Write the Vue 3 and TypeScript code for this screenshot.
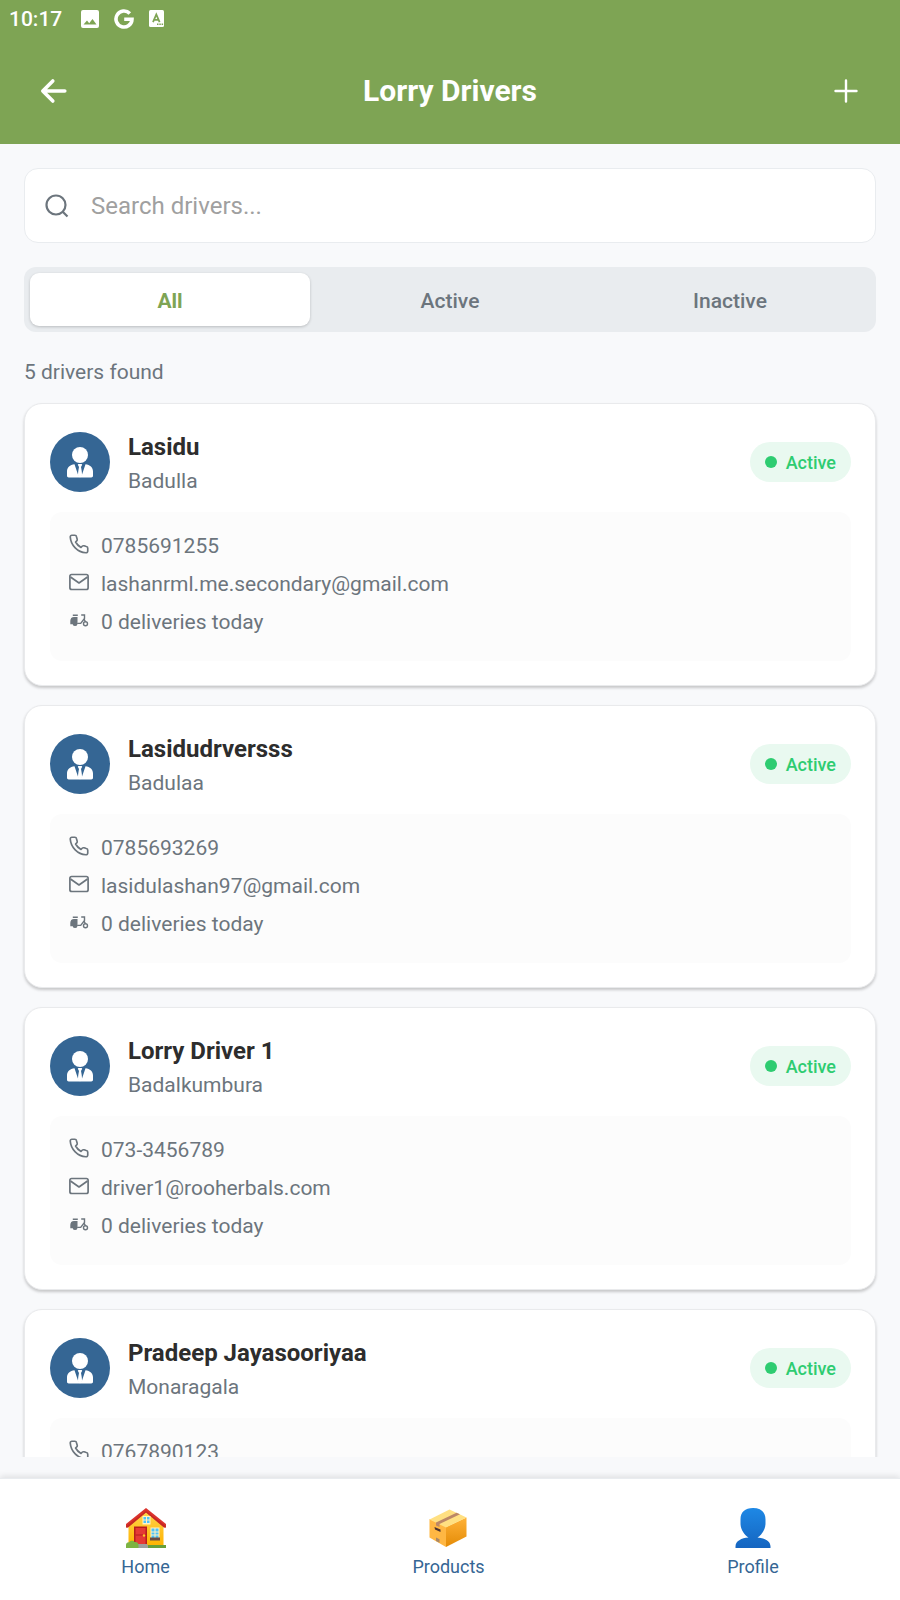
<script setup lang="ts">
import { computed, ref } from 'vue'

interface Driver {
  name: string
  town: string
  phone: string
  email: string
  deliveries: number
  active: boolean
}

const drivers: Driver[] = [
  { name: 'Lasidu', town: 'Badulla', phone: '0785691255', email: 'lashanrml.me.secondary@gmail.com', deliveries: 0, active: true },
  { name: 'Lasidudrversss', town: 'Badulaa', phone: '0785693269', email: 'lasidulashan97@gmail.com', deliveries: 0, active: true },
  { name: 'Lorry Driver 1', town: 'Badalkumbura', phone: '073-3456789', email: 'driver1@rooherbals.com', deliveries: 0, active: true },
  { name: 'Pradeep Jayasooriyaa', town: 'Monaragala', phone: '0767890123', email: '', deliveries: 0, active: true },
]
const total = 5

const filters = ['All', 'Active', 'Inactive'] as const
const filter = ref<(typeof filters)[number]>('All')
const query = ref('')

const shown = computed(() =>
  drivers.filter(
    (d) =>
      (filter.value === 'All' || d.active === (filter.value === 'Active')) &&
      d.name.toLowerCase().includes(query.value.toLowerCase()),
  ),
)
const found = computed(() => (shown.value.length === drivers.length ? total : shown.value.length))
</script>

<template>
  <div class="app">
    <header class="top">
      <div class="status">
        <span class="time">10:17</span>
        <svg width="18" height="18" viewBox="0 0 18 18"><path fill="#fff" fill-rule="evenodd" d="M2 0h14a2 2 0 0 1 2 2v14a2 2 0 0 1-2 2H2a2 2 0 0 1-2-2V2a2 2 0 0 1 2-2zM2.500 14.500h13L11.500 9l-3.300 4.200L6 10.500z" /></svg>
        <svg width="20" height="20" viewBox="0 0 20 20" fill="none" stroke="#fff" stroke-width="3.600"><path d="M15.800 4.500A8 8 0 1 0 18 10.200H10.200" /></svg>
        <svg width="15" height="17" viewBox="0 0 15 17"><rect width="15" height="17" rx="1.500" fill="#fff" /><path fill="none" stroke="#7ea454" stroke-width="1.800" d="M4 12.200 7.300 4.500l3.300 7.700M5.200 9.800h4.300" /><path fill="#7ea454" d="M8 13.600h1.500v1.500H8zM10.300 13.600h1.500v1.500h-1.500zM12.600 13.600h1.500v1.500h-1.500z" /></svg>
      </div>
      <div class="bar">
        <button class="icon-btn" type="button" aria-label="Back">
          <svg width="28" height="28" viewBox="0 0 28 28" fill="none" stroke="#fff" stroke-width="3.600" stroke-linecap="round" stroke-linejoin="round"><path d="M12.800 4 2.800 14l10 10M3.300 14h21.500" /></svg>
        </button>
        <h1>Lorry Drivers</h1>
        <button class="icon-btn" type="button" aria-label="Add driver">
          <svg width="28" height="28" viewBox="0 0 28 28" fill="none" stroke="#fff" stroke-width="2.400" stroke-linecap="round"><path d="M14 3.500v21M3.500 14h21" /></svg>
        </button>
      </div>
    </header>

    <main class="content">
      <label class="search">
        <svg width="26" height="26" viewBox="0 0 26 26" fill="none" stroke="#6c757d" stroke-width="2.200"><circle cx="12" cy="12" r="9.500" /><path d="m18.500 18.500 5 5" /></svg>
        <input v-model="query" type="text" placeholder="Search drivers..." aria-label="Search drivers" />
      </label>

      <div class="tabs">
        <button v-for="f in filters" :key="f" type="button" :class="{ on: filter === f }" :aria-pressed="filter === f" @click="filter = f">{{ f }}</button>
      </div>

      <p class="count">{{ found }} drivers found</p>

      <article v-for="d in shown" :key="d.phone" class="card">
        <div class="head">
          <span class="avatar">
            <svg width="26" height="31" viewBox="0 0 26 31" fill="#fff">
              <circle cx="13" cy="8" r="8" />
              <path d="M7.500 17.300 11.300 28.500 12 20l-1.200-2.200.5-.8h3.400l.5.800L14 20l.7 8.500 3.800-11.200C23 17.800 26 20.500 26 24.500v4.300c0 1-.8 1.700-1.700 1.700H1.700C.8 30.500 0 29.800 0 28.800v-4.300c0-4 3-6.700 7.500-7.200z" />
              <path d="M12 20h2l1 7.500-2 3-2-3z" />
            </svg>
          </span>
          <div class="who">
            <h2>{{ d.name }}</h2>
            <p>{{ d.town }}</p>
          </div>
          <span class="badge"><i class="dot"></i>{{ d.active ? 'Active' : 'Inactive' }}</span>
        </div>
        <ul class="info">
          <li>
            <svg width="20" height="20" viewBox="0 0 24 24" fill="none" stroke="#6c757d" stroke-width="2" stroke-linejoin="round"><path d="M22.500 17v3.500a2 2 0 0 1-2.200 2A20.500 20.500 0 0 1 1.500 3.700 2 2 0 0 1 3.500 1.500H7a2 2 0 0 1 2 1.700c.2 1 .4 2 .8 2.900a2 2 0 0 1-.5 2.100L7.900 9.600a16 16 0 0 0 6.500 6.500l1.400-1.400a2 2 0 0 1 2.100-.5c.9.400 1.900.6 2.900.8a2 2 0 0 1 1.700 2z" /></svg>
            <span>{{ d.phone }}</span>
          </li>
          <li>
            <svg width="20" height="20" viewBox="0 0 20 20" fill="none" stroke="#6c757d" stroke-width="1.700" stroke-linejoin="round"><rect x="0.900" y="2.500" width="18.200" height="15" rx="1.800" /><path d="m1.500 5 8.500 6 8.500-6" /></svg>
            <span>{{ d.email }}</span>
          </li>
          <li>
            <svg width="20" height="20" viewBox="0 0 20 20"><path fill="#6c757d" d="M3.800 4.500h5v1.400h-5zM5 6.900h3.500v6H9a2.400 2.400 0 0 1-.6 1.300 2.400 2.400 0 0 1-4.700 0H1.300V11c0-2.500 1.300-4.100 3.700-4.100z" /><path fill="none" stroke="#6c757d" stroke-width="1.400" d="M8.500 13.400h3.200l3.800-5V5h-3.300M15 9.200l1.400 2.400" /><circle cx="16.500" cy="13.800" r="2" fill="none" stroke="#6c757d" stroke-width="1.400" /></svg>
            <span>{{ d.deliveries }} deliveries today</span>
          </li>
        </ul>
      </article>
    </main>

    <nav class="nav">
      <a href="#home">
        <svg width="42" height="42" viewBox="0 0 42 42">
          <defs><linearGradient id="wall" x1="0" y1="0" x2="0" y2="1"><stop offset="0" stop-color="#ffd54f" /><stop offset="1" stop-color="#ffb300" /></linearGradient></defs>
          <path fill="url(#wall)" d="M3.500 17 21 3l17.500 14v22h-35z" />
          <path fill="#db322c" d="M21 1 1 17v3.500h2L21 5.500l18 15h2V17z" />
          <path fill="#b5221f" d="M1 19v1.500h2L21 5.500l18 15h2V19L21 4z" opacity=".6" />
          <rect x="17.500" y="9" width="8" height="8.500" fill="#fff3c4" /><rect x="18.500" y="10" width="6" height="6" fill="#4fc3f7" /><path stroke="#fff3c4" d="M21.500 10v6M18 13h7" />
          <rect x="9" y="19.500" width="13" height="17.500" fill="#b71c1c" /><rect x="10.500" y="21" width="10" height="16" fill="#e53935" /><path stroke="#b71c1c" d="M10.500 28h10" /><circle cx="19" cy="28.500" r="1.200" fill="#ffca28" />
          <rect x="25.500" y="20.500" width="9" height="11" fill="#fff3c4" /><rect x="26.500" y="21.500" width="7" height="9.500" fill="#4fc3f7" /><path stroke="#fff3c4" d="M30 21v10M26 25h8M26 28h8" /><rect x="25" y="30.500" width="10" height="3" fill="#6d4c41" />
          <path fill="#9e9e9e" d="M12 37h10l2 4H12z" /><rect x="23" y="38" width="18" height="3" fill="#689f38" />
          <path fill="#7cb342" d="M1 41v-3c0-2 2-3 3-2.500C5 33 9 33.500 9.500 35c2-.5 4 .8 4 3V41z" />
        </svg>
        <span>Home</span>
      </a>
      <a href="#products">
        <svg width="42" height="42" viewBox="0 0 42 42">
          <defs><linearGradient id="side" x1="0" y1="0" x2="0" y2="1"><stop offset="0" stop-color="#ffb238" /><stop offset="1" stop-color="#e48b06" /></linearGradient></defs>
          <path fill="#ffb743" d="M2.500 12 19 19v21L2.500 30.500z" /><path fill="url(#side)" d="M19 20 39.500 10.500v19L19 40z" />
          <path fill="#ffe082" d="M2.500 12.500 22.500 2.500l17 8L19 20.500z" />
          <path fill="#bc8766" d="m9 15.500 20.500-9.800 3.500 1.500L12.500 17v3L9 18.500z" />
          <path fill="#a98767" d="M9 30.500l3.500 1.800v3.500L9 34z" /><path fill="#4e342e" d="m7.500 20 6 2.500v2.500L8 22.500z" />
        </svg>
        <span>Products</span>
      </a>
      <a href="#profile">
        <svg width="42" height="42" viewBox="0 0 42 42">
          <defs><linearGradient id="bust" x1="0" y1="0" x2="0" y2="1"><stop offset="0" stop-color="#1e88e5" /><stop offset="1" stop-color="#1565c0" /></linearGradient></defs>
          <path fill="url(#bust)" d="M21 1c8 0 12.500 4 12.500 11.500v4c0 6-4 11.500-8 14 7 .5 13 3.500 13 9V41h-35v-1.500c0-5.500 6-8.500 13-9-4-2.500-8-8-8-14v-4C8.500 5 13 1 21 1z" />
        </svg>
        <span>Profile</span>
      </a>
    </nav>
  </div>
</template>

<style>
body {
  background: #f8f9fb;
}
</style>

<style scoped>
.app {
  display: flex;
  flex-direction: column;
  height: 100vh;
  box-sizing: border-box;
  background: #f8f9fb;
  color: #6c757d;
  font-family: Roboto, 'Liberation Sans', sans-serif;
}
h1, h2, p, ul {
  margin: 0;
  padding: 0;
}
svg {
  display: block;
  flex: none;
}
button {
  border: 0;
  padding: 0;
  background: none;
  font: inherit;
  color: inherit;
}
.top {
  flex: none;
  background: #7ea454;
  color: #fff;
}
.status {
  display: flex;
  align-items: center;
  gap: 15px;
  height: 37px;
  padding: 0 9px;
}
.time {
  margin-right: 4px;
  font-size: 21px;
  font-weight: 500;
}
.bar {
  display: flex;
  align-items: center;
  justify-content: space-between;
  height: 107px;
  padding: 0 24px;
}
.icon-btn {
  display: grid;
  place-items: center;
  width: 60px;
  height: 60px;
}
h1 {
  padding-top: 1px;
  font-size: 30px;
  line-height: 36px;
  font-weight: 700;
}
.content {
  flex: 1;
  min-height: 0;
  margin-bottom: 21px;
  padding: 24px 24px 0;
  overflow-y: auto;
  scrollbar-width: none;
}
.search {
  display: flex;
  align-items: center;
  gap: 21px;
  height: 75px;
  box-sizing: border-box;
  padding: 0 19px;
  border: 1px solid #e9ecef;
  border-radius: 14px;
  background: #fff;
}
.search input {
  flex: 1;
  min-width: 0;
  padding: 1px 0 0;
  border: 0;
  outline: 0;
  background: none;
  font: 24px Roboto, 'Liberation Sans', sans-serif;
  color: #2d2d2d;
}
.search input::placeholder {
  color: #a0a0a0;
  opacity: 1;
}
.tabs {
  display: flex;
  margin-top: 24px;
  padding: 6px;
  border-radius: 12px;
  background: #e9ecef;
}
.tabs button {
  flex: 1;
  height: 53px;
  padding-top: 2px;
  border-radius: 9px;
  font-size: 21px;
  font-weight: 500;
}
.tabs .on {
  background: #fff;
  color: #7ea454;
  font-weight: 700;
  box-shadow: 0 1px 3px rgba(0, 0, 0, 0.2);
}
.count {
  margin: 24px 0 15px;
  font-size: 21px;
  line-height: 32px;
}
.card {
  margin-bottom: 19px;
  padding: 24px;
  padding-left: 25px;
  border: 1px solid #e9eaec;
  border-radius: 18px;
  background: #fff;
  box-shadow: 0 2px 3px rgba(0, 0, 0, 0.2);
}
.head {
  display: flex;
  align-items: center;
  height: 68px;
  margin-bottom: 16px;
}
.avatar {
  display: grid;
  place-items: center;
  flex: none;
  width: 60px;
  height: 60px;
  border-radius: 50%;
  background: #356694;
}
.who {
  flex: 1;
  min-width: 0;
  margin-left: 18px;
  padding-top: 2px;
}
h2 {
  color: #2d2d2d;
  font-size: 24px;
  line-height: 36px;
  font-weight: 700;
}
.who p {
  font-size: 21px;
  line-height: 32px;
}
.badge {
  display: flex;
  align-items: center;
  height: 40px;
  padding: 0 15px;
  border-radius: 20px;
  background: #e9f9f0;
  color: #2ecc71;
  font-size: 18px;
  font-weight: 500;
}
.dot {
  width: 12px;
  height: 12px;
  margin-right: 9px;
  border-radius: 50%;
  background: #2ecc71;
}
.info {
  padding: 18px 18px 17px 19px;
  border-radius: 12px;
  background: #fcfcfc;
  list-style: none;
}
.info li {
  display: flex;
  gap: 12px;
  height: 32px;
  margin-bottom: 6px;
  font-size: 21px;
  line-height: 32px;
}
.info svg {
  margin-top: 4px;
}
.nav {
  display: flex;
  flex: none;
  justify-content: space-around;
  padding: 28px 0 21px;
  border-top: 1px solid #e9ecef;
  background: #fff;
  box-shadow: 0 -2px 6px rgba(0, 0, 0, 0.1);
}
.nav a {
  display: flex;
  flex-direction: column;
  align-items: center;
  gap: 6px;
  color: #356694;
  font-size: 18px;
  line-height: 24px;
  text-decoration: none;
}
</style>
